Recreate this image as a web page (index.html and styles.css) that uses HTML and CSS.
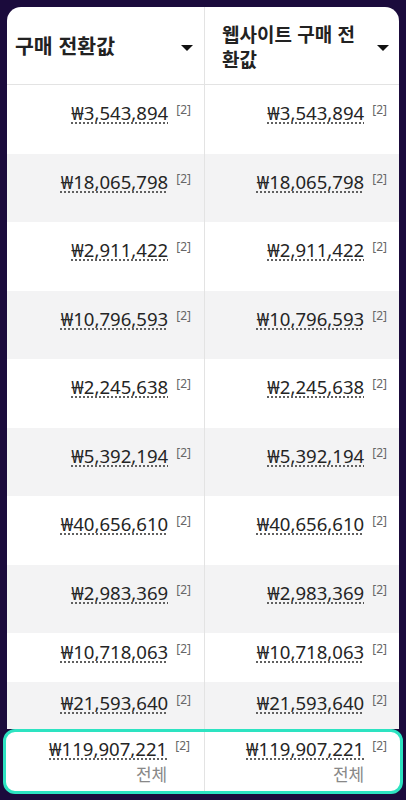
FILE: index.html
```html
<!DOCTYPE html>
<html lang="ko">
<head>
    <meta charset="UTF-8">
    <meta name="viewport" content="width=device-width, initial-scale=1.0">
    <title>구매 전환값</title>
    <link rel="stylesheet" href="styles.css">
</head>
<body>
    <div class="page">
        <div class="card">
            <div class="head">
                <div class="th th-left">
                    <span class="th-text big">구매 전환값</span>
                    <span class="caret"></span>
                </div>
                <div class="th th-right">
                    <span class="th-text small">웹사이트 구매 전환값</span>
                    <span class="caret"></span>
                </div>
            </div>

            <div class="row">
                <div class="td"><span class="amount">₩3,543,894</span><span class="ref">[2]</span></div>
                <div class="td td-right"><span class="amount">₩3,543,894</span><span class="ref">[2]</span></div>
            </div>
            <div class="row alt">
                <div class="td"><span class="amount">₩18,065,798</span><span class="ref">[2]</span></div>
                <div class="td td-right"><span class="amount">₩18,065,798</span><span class="ref">[2]</span></div>
            </div>
            <div class="row">
                <div class="td"><span class="amount">₩2,911,422</span><span class="ref">[2]</span></div>
                <div class="td td-right"><span class="amount">₩2,911,422</span><span class="ref">[2]</span></div>
            </div>
            <div class="row alt">
                <div class="td"><span class="amount">₩10,796,593</span><span class="ref">[2]</span></div>
                <div class="td td-right"><span class="amount">₩10,796,593</span><span class="ref">[2]</span></div>
            </div>
            <div class="row">
                <div class="td"><span class="amount">₩2,245,638</span><span class="ref">[2]</span></div>
                <div class="td td-right"><span class="amount">₩2,245,638</span><span class="ref">[2]</span></div>
            </div>
            <div class="row alt">
                <div class="td"><span class="amount">₩5,392,194</span><span class="ref">[2]</span></div>
                <div class="td td-right"><span class="amount">₩5,392,194</span><span class="ref">[2]</span></div>
            </div>
            <div class="row">
                <div class="td"><span class="amount">₩40,656,610</span><span class="ref">[2]</span></div>
                <div class="td td-right"><span class="amount">₩40,656,610</span><span class="ref">[2]</span></div>
            </div>
            <div class="row alt">
                <div class="td"><span class="amount">₩2,983,369</span><span class="ref">[2]</span></div>
                <div class="td td-right"><span class="amount">₩2,983,369</span><span class="ref">[2]</span></div>
            </div>
            <div class="row short-a">
                <div class="td"><span class="amount">₩10,718,063</span><span class="ref">[2]</span></div>
                <div class="td td-right"><span class="amount">₩10,718,063</span><span class="ref">[2]</span></div>
            </div>
            <div class="row alt short-b">
                <div class="td"><span class="amount">₩21,593,640</span><span class="ref">[2]</span></div>
                <div class="td td-right"><span class="amount">₩21,593,640</span><span class="ref">[2]</span></div>
            </div>
        </div>

        <div class="total">
            <div class="tf">
                <div class="stack">
                    <span class="amount">₩119,907,221</span>
                    <span class="label">전체</span>
                </div>
                <span class="ref">[2]</span>
            </div>
            <div class="tf tf-right">
                <div class="stack">
                    <span class="amount">₩119,907,221</span>
                    <span class="label">전체</span>
                </div>
                <span class="ref">[2]</span>
            </div>
        </div>
    </div>
</body>
</html>
```

FILE: styles.css
```css
body {
	margin: 0;
	background: #1b0b3c;
	font-family: "Noto Sans CJK KR", "Noto Sans", sans-serif;
	overflow: hidden;
}

.page {
	padding-top: 7px;
	height: 793px;
}

.card {
	margin: 0 7px;
	background: #fff;
	border-radius: 14px 14px 0 0;
	overflow: hidden;
}

.head {
	display: grid;
	grid-template-columns: 197px 195px;
	height: 77px;
	border-bottom: 1px solid #e3e3e3;
}

.th {
	display: flex;
	align-items: center;
	justify-content: space-between;
}

.th-left {
	padding: 0 11px 0 8px;
}

.th-right {
	padding: 0 10px 0 17px;
	border-left: 1px solid #e3e3e3;
}

.th-text {
	font-weight: 700;
	color: #222;
}

.th-text.big {
	font-size: 20.5px;
	line-height: 25px;
}

.th-text.small {
	font-size: 19px;
	line-height: 25px;
	width: 140px;
}

.caret {
	width: 0;
	height: 0;
	border-left: 6px solid transparent;
	border-right: 6px solid transparent;
	border-top: 6px solid #111;
	margin-top: 4px;
}

.row {
	display: grid;
	grid-template-columns: 197px 195px;
	height: 68.5px;
}

.row.alt {
	background: #f3f3f4;
}

.row.short-a {
	height: 49px;
}

.row.short-b {
	height: 47px;
}

.td {
	display: flex;
	justify-content: flex-end;
	align-items: flex-start;
	padding: 16px 13px 0 0;
}

.td-right {
	padding-right: 12px;
	border-left: 1px solid #e3e3e3;
}

.short-a .td {
	padding-top: 7px;
}

.short-b .td {
	padding-top: 9px;
}

.amount {
	font-family: "Noto Sans", "Noto Sans CJK KR", sans-serif;
	font-size: 18.6px;
	line-height: 24px;
	color: #252525;
	text-decoration: underline dotted #555;
	text-underline-offset: 3px;
}

.ref {
	font-family: "Noto Sans", sans-serif;
	font-size: 12px;
	line-height: 16px;
	color: #666;
	margin-left: 8px;
	margin-top: 1px;
}

.total {
	margin: 0 3px;
	height: 65px;
	box-sizing: border-box;
	border: 3px solid #2de3c1;
	border-radius: 12px;
	background: #fff;
	display: grid;
	grid-template-columns: 198px 196px;
}

.tf {
	display: flex;
	justify-content: flex-end;
	align-items: flex-start;
	padding: 5px 14px 0 0;
}

.tf-right {
	padding-right: 13px;
	border-left: 1px solid #e3e3e3;
}

.stack {
	display: flex;
	flex-direction: column;
	align-items: flex-end;
}

.label {
	font-size: 17px;
	line-height: 22px;
	color: #888;
	margin-top: 2px;
}
```
